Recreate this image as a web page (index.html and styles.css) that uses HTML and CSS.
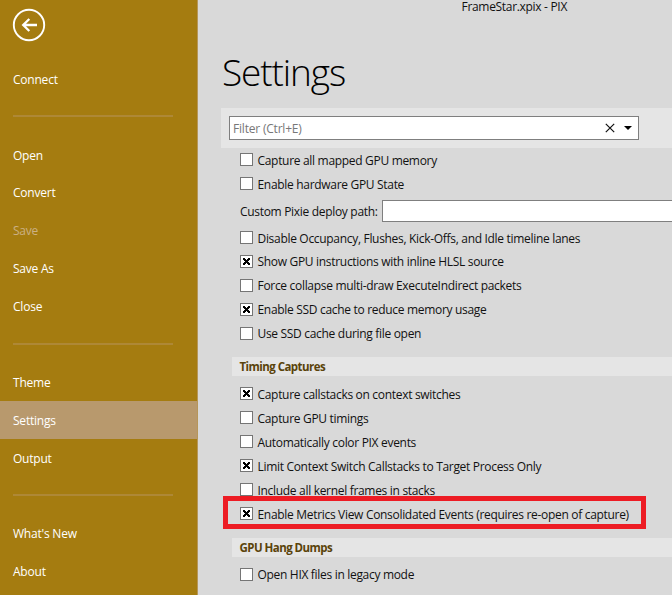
FILE: index.html
```html
<!DOCTYPE html>
<html lang="en">
<head>
<meta charset="utf-8">
<title>FrameStar.xpix - PIX</title>
<link rel="stylesheet" href="styles.css">
</head>
<body>
<div class="app">
  <nav class="sidebar">
    <div class="back">
      <svg width="34" height="34" viewBox="0 0 34 34" fill="none" stroke="#fff">
        <circle cx="17" cy="17" r="15.2" stroke-width="1.9"/>
        <path d="M25 17H11M17.3 11L11.2 17L17.3 23" stroke-width="2.3"/>
      </svg>
    </div>
    <a class="item">Connect</a>
    <div class="sep"></div>
    <a class="item">Open</a>
    <a class="item">Convert</a>
    <a class="item disabled">Save</a>
    <a class="item">Save As</a>
    <a class="item">Close</a>
    <div class="sep"></div>
    <a class="item">Theme</a>
    <a class="item active">Settings</a>
    <a class="item">Output</a>
    <div class="sep"></div>
    <a class="item">What's New</a>
    <a class="item">About</a>
  </nav>
  <main class="main">
    <div class="window-title">FrameStar.xpix - PIX</div>
    <h1 class="heading">Settings</h1>
    <div class="filter-band">
      <div class="filter">
        <span class="placeholder">Filter (Ctrl+E)</span>
        <svg class="clear" width="10" height="10" viewBox="0 0 10 10"><path d="M.8 .8L9.2 9.2M9.2 .8L.8 9.2" stroke="#111" stroke-width="1.2"/></svg>
        <svg class="arrow" width="8" height="4" viewBox="0 0 8 4"><path d="M0 0H8L4 4Z" fill="#000"/></svg>
      </div>
    </div>
    <div class="options">
      <div class="row"><i class="box"></i><span>Capture all mapped GPU memory</span></div>
      <div class="row"><i class="box"></i><span>Enable hardware GPU State</span></div>
      <div class="path-row"><span>Custom Pixie deploy path:</span><div class="path-input"></div></div>
      <div class="row"><i class="box"></i><span>Disable Occupancy, Flushes, Kick-Offs, and Idle timeline lanes</span></div>
      <div class="row up"><i class="box on"></i><span>Show GPU instructions with inline HLSL source</span></div>
      <div class="row up"><i class="box"></i><span>Force collapse multi-draw ExecuteIndirect packets</span></div>
      <div class="row up"><i class="box on"></i><span>Enable SSD cache to reduce memory usage</span></div>
      <div class="row up"><i class="box"></i><span>Use SSD cache during file open</span></div>
    </div>
    <h2 class="group">Timing Captures</h2>
    <div class="options timing">
      <div class="row"><i class="box on"></i><span>Capture callstacks on context switches</span></div>
      <div class="row"><i class="box"></i><span>Capture GPU timings</span></div>
      <div class="row"><i class="box"></i><span>Automatically color PIX events</span></div>
      <div class="row"><i class="box on"></i><span>Limit Context Switch Callstacks to Target Process Only</span></div>
      <div class="row"><i class="box"></i><span>Include all kernel frames in stacks</span></div>
      <div class="row marked"><i class="box on"></i><span>Enable Metrics View Consolidated Events (requires re-open of capture)</span></div>
    </div>
    <h2 class="group hang">GPU Hang Dumps</h2>
    <div class="options legacy">
      <div class="row up"><i class="box"></i><span>Open HIX files in legacy mode</span></div>
    </div>
  </main>
</div>
</body>
</html>
```
FILE: styles.css
```css
*, *::before, *::after { box-sizing: border-box; }
body {
  margin: 0;
  background: #d9d9d9;
  color: #111;
  font: 12px/16px "Open Sans", "Noto Sans", sans-serif;
  letter-spacing: -0.31px;
}
.app { display: flex; width: 672px; height: 595px; overflow: hidden; }
.sidebar {
  flex: none;
  width: 198px;
  background: #a57c10;
  border-right: 1px solid #b6965a;
  color: #fff;
  letter-spacing: -0.22px;
}
.back { height: 59.8px; padding: 8px 0 0 12px; }
.item { display: flex; align-items: center; height: 37.9px; padding: 2px 0 0 13px; }
.item.disabled { color: #cbb084; }
.item.active { background: #b8996d; }
.sep { height: 37.9px; padding: 17.5px 24px 0 13px; }
.sep::before { content: ""; display: block; height: 2px; background: #ae8836; }
.main { flex: 1; min-width: 0; white-space: nowrap; }
.window-title { height: 14px; line-height: 14px; padding-left: 263.5px; }
.heading {
  margin: 0;
  height: 94px;
  padding: 32px 0 0 24px;
  font-size: 37px;
  line-height: 52px;
  font-weight: 300;
  letter-spacing: -1.1px;
  color: #000;
}
.filter-band { height: 40px; margin-left: 23px; padding: 8px 0 0 8px; background: #e5e5e5; }
.filter {
  display: flex;
  align-items: center;
  width: 410px;
  height: 24px;
  padding: 0 6px 0 3px;
  background: #fff;
  border: 1px solid #7f7f7f;
}
.placeholder { flex: 1; padding-top: 1px; color: #777; letter-spacing: -0.2px; }
.arrow { margin-left: 9px; }
.options { padding: 0 0 0 42px; }
.row { display: flex; align-items: flex-start; height: 24px; gap: 4.5px; padding-top: 5px; }
.row.up span { margin-top: -1px; }
.box { flex: none; width: 13px; height: 13px; background: #fff; border: 1px solid #757575; }
.box.on {
  background:
    linear-gradient(45deg, transparent 39%, #000 39%, #000 61%, transparent 61%) 2px 2px / 7px 7px no-repeat,
    linear-gradient(-45deg, transparent 39%, #000 39%, #000 61%, transparent 61%) 2px 2px / 7px 7px no-repeat,
    #fff;
}
.path-row { display: flex; align-items: center; height: 30px; }
.path-row span { width: 142px; padding-top: 2px; }
.path-input { flex: 1; height: 22px; background: #fff; border: 1px solid #7f7f7f; border-right: 0; }
.group {
  height: 19px;
  margin: 11px 0 0 34px;
  padding-left: 7.5px;
  background: #e5e5e5;
  color: #5a430a;
  font-size: 11.5px;
  line-height: 20px;
  font-weight: 700;
  letter-spacing: -0.55px;
}
.timing { padding-top: 6px; }
.marked { position: relative; }
.marked::after {
  content: "";
  position: absolute;
  left: -17px;
  top: -6px;
  width: 423px;
  height: 33px;
  border: 5px solid #ed1c24;
}
.hang { margin-top: 12px; }
.legacy { padding-top: 6px; }
```
